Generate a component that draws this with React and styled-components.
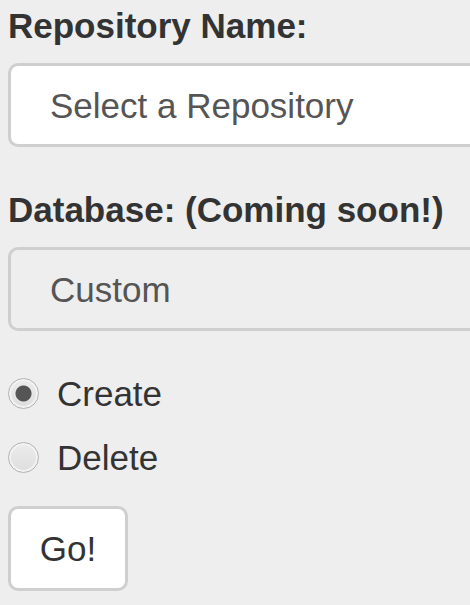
import styled, { createGlobalStyle } from "styled-components";

const GlobalStyle = createGlobalStyle`
  html, body {
    margin: 0;
    padding: 0;
    background: #eeeeee;
    overflow: hidden;
  }
  body {
    font-family: "Liberation Sans", Arial, sans-serif;
    color: #333333;
  }
`;

const Page = styled.div`
  padding: 1px 0 0 8px;
  font-size: 35px;
  line-height: 49px;
  overflow: hidden;
`;

const FormGroup = styled.div`
  margin-bottom: 38px;
`;

const Label = styled.label`
  display: block;
  font-weight: 700;
  margin-bottom: 13px;
`;

const Field = styled.div`
  box-sizing: border-box;
  width: calc(100% + 40px);
  height: 84px;
  display: flex;
  align-items: center;
  padding-left: 39px;
  border: 3px solid #cfcfcf;
  border-radius: 10px;
  background: ${(p) => (p.disabled ? "#eeeeee" : "#ffffff")};
  color: #555555;
`;

const RadioGroup = styled.div`
  display: flex;
  flex-direction: column;
  gap: 14.5px;
  margin-bottom: 24px;
`;

const RadioRow = styled.label`
  display: flex;
  align-items: center;
  gap: 18px;
`;

const Radio = styled.input.attrs({ type: "radio" })`
  appearance: none;
  margin: 0;
  box-sizing: border-box;
  width: 31px;
  height: 31px;
  border-radius: 50%;
  border: 1.5px solid #b3b3b3;
  box-shadow: inset 0 0 0 2px #f3f3f3;
  background: linear-gradient(#ececec, #dedede);

  &:checked {
    background: radial-gradient(circle, #555555 0 7.5px, transparent 8.5px),
      linear-gradient(#ececec, #dedede);
  }
`;

const Button = styled.button`
  box-sizing: border-box;
  width: 120px;
  height: 85px;
  padding: 0;
  border: 3px solid #cfcfcf;
  border-radius: 10px;
  background: #ffffff;
  color: #333333;
  font-family: inherit;
  font-size: 35px;
  line-height: 49px;
  text-align: center;
`;

export default function App() {
  return (
    <>
      <GlobalStyle />
      <Page>
        <FormGroup>
          <Label>Repository Name:</Label>
          <Field>Select a Repository</Field>
        </FormGroup>
        <FormGroup>
          <Label>Database: (Coming soon!)</Label>
          <Field disabled>Custom</Field>
        </FormGroup>
        <RadioGroup>
          <RadioRow>
            <Radio name="action" defaultChecked />
            Create
          </RadioRow>
          <RadioRow>
            <Radio name="action" />
            Delete
          </RadioRow>
        </RadioGroup>
        <Button>Go!</Button>
      </Page>
    </>
  );
}
